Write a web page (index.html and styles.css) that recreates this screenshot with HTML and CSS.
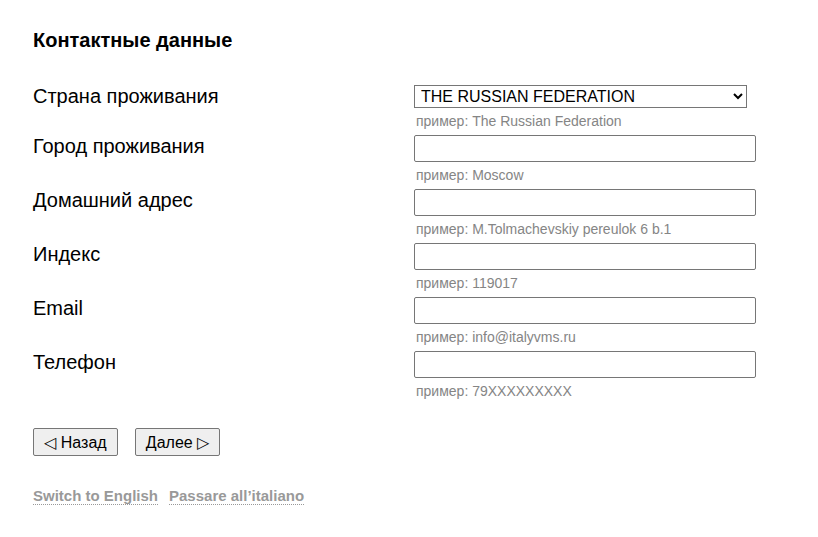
FILE: index.html
```html
<!DOCTYPE html>
<html lang="ru">
<head>
<meta charset="utf-8">
<link rel="stylesheet" href="styles.css">
</head>
<body>
<div class="page">
  <h2 class="title">Контактные данные</h2>
  <div class="form">
    <div class="row">
      <div class="label">Страна проживания</div>
      <div class="field">
        <select class="select"><option>THE RUSSIAN FEDERATION</option></select>
        <div class="hint">пример: The Russian Federation</div>
      </div>
    </div>
    <div class="row">
      <div class="label">Город проживания</div>
      <div class="field">
        <input class="input" type="text">
        <div class="hint">пример: Moscow</div>
      </div>
    </div>
    <div class="row">
      <div class="label">Домашний адрес</div>
      <div class="field">
        <input class="input" type="text">
        <div class="hint">пример: M.Tolmachevskiy pereulok 6 b.1</div>
      </div>
    </div>
    <div class="row">
      <div class="label">Индекс</div>
      <div class="field">
        <input class="input" type="text">
        <div class="hint">пример: 119017</div>
      </div>
    </div>
    <div class="row">
      <div class="label">Email</div>
      <div class="field">
        <input class="input" type="text">
        <div class="hint">пример: info@italyvms.ru</div>
      </div>
    </div>
    <div class="row">
      <div class="label">Телефон</div>
      <div class="field">
        <input class="input" type="text">
        <div class="hint">пример: 79XXXXXXXXX</div>
      </div>
    </div>
  </div>
  <div class="buttons">
    <button class="btn">◁ Назад</button>
    <button class="btn">Далее ▷</button>
  </div>
  <div class="langs">
    <a class="lang" href="#">Switch to English</a>
    <a class="lang" href="#">Passare all’italiano</a>
  </div>
</div>
</body>
</html>
```
FILE: styles.css
```css
html, body {
  margin: 0;
  padding: 0;
  background: #fff;
}
body {
  font-family: "Liberation Sans", Arial, sans-serif;
  color: #000;
}
.page {
  padding: 29px 0 0 33px;
}
.title {
  margin: 0;
  font-size: 20px;
  line-height: 23px;
  font-weight: bold;
}
.form {
  margin-top: 33px;
  display: flex;
  flex-direction: column;
}
.row {
  display: flex;
  padding-bottom: 6px;
}
.label {
  width: 381px;
  font-size: 20px;
  line-height: 22px;
}
.field {
  display: flex;
  flex-direction: column;
}
.select {
  width: 333px;
  height: 23px;
  box-sizing: border-box;
  margin: 0;
  font-family: "Liberation Sans", Arial, sans-serif;
  font-size: 16px;
  border: 1px solid #767676;
  border-radius: 0;
  background: #fff;
  color: #000;
  padding: 0 0 0 2px;
}
.input {
  width: 342px;
  height: 27px;
  box-sizing: border-box;
  margin: 0;
  border: 1px solid #767676;
  border-radius: 2px;
  padding: 1px 2px;
  font-size: 16px;
  font-family: "Liberation Sans", Arial, sans-serif;
}
.hint {
  padding-top: 5px;
  font-size: 14px;
  line-height: 16px;
  color: #858585;
  padding-left: 2px;
}
.buttons {
  margin-top: 23px;
  display: flex;
  gap: 17px;
}
.btn {
  height: 28px;
  width: 85px;
  margin: 0;
  padding: 0;
  font-family: "Liberation Sans", Arial, sans-serif;
  font-size: 16px;
  color: #000;
  background: #efefef;
  border: 1px solid #767676;
  border-radius: 2px;
}
.langs {
  margin-top: 31px;
  display: flex;
  gap: 11px;
}
.lang {
  font-size: 15px;
  font-weight: bold;
  line-height: 17px;
  color: #999;
  text-decoration: none;
  border-bottom: 1px dotted #999;
}
```
